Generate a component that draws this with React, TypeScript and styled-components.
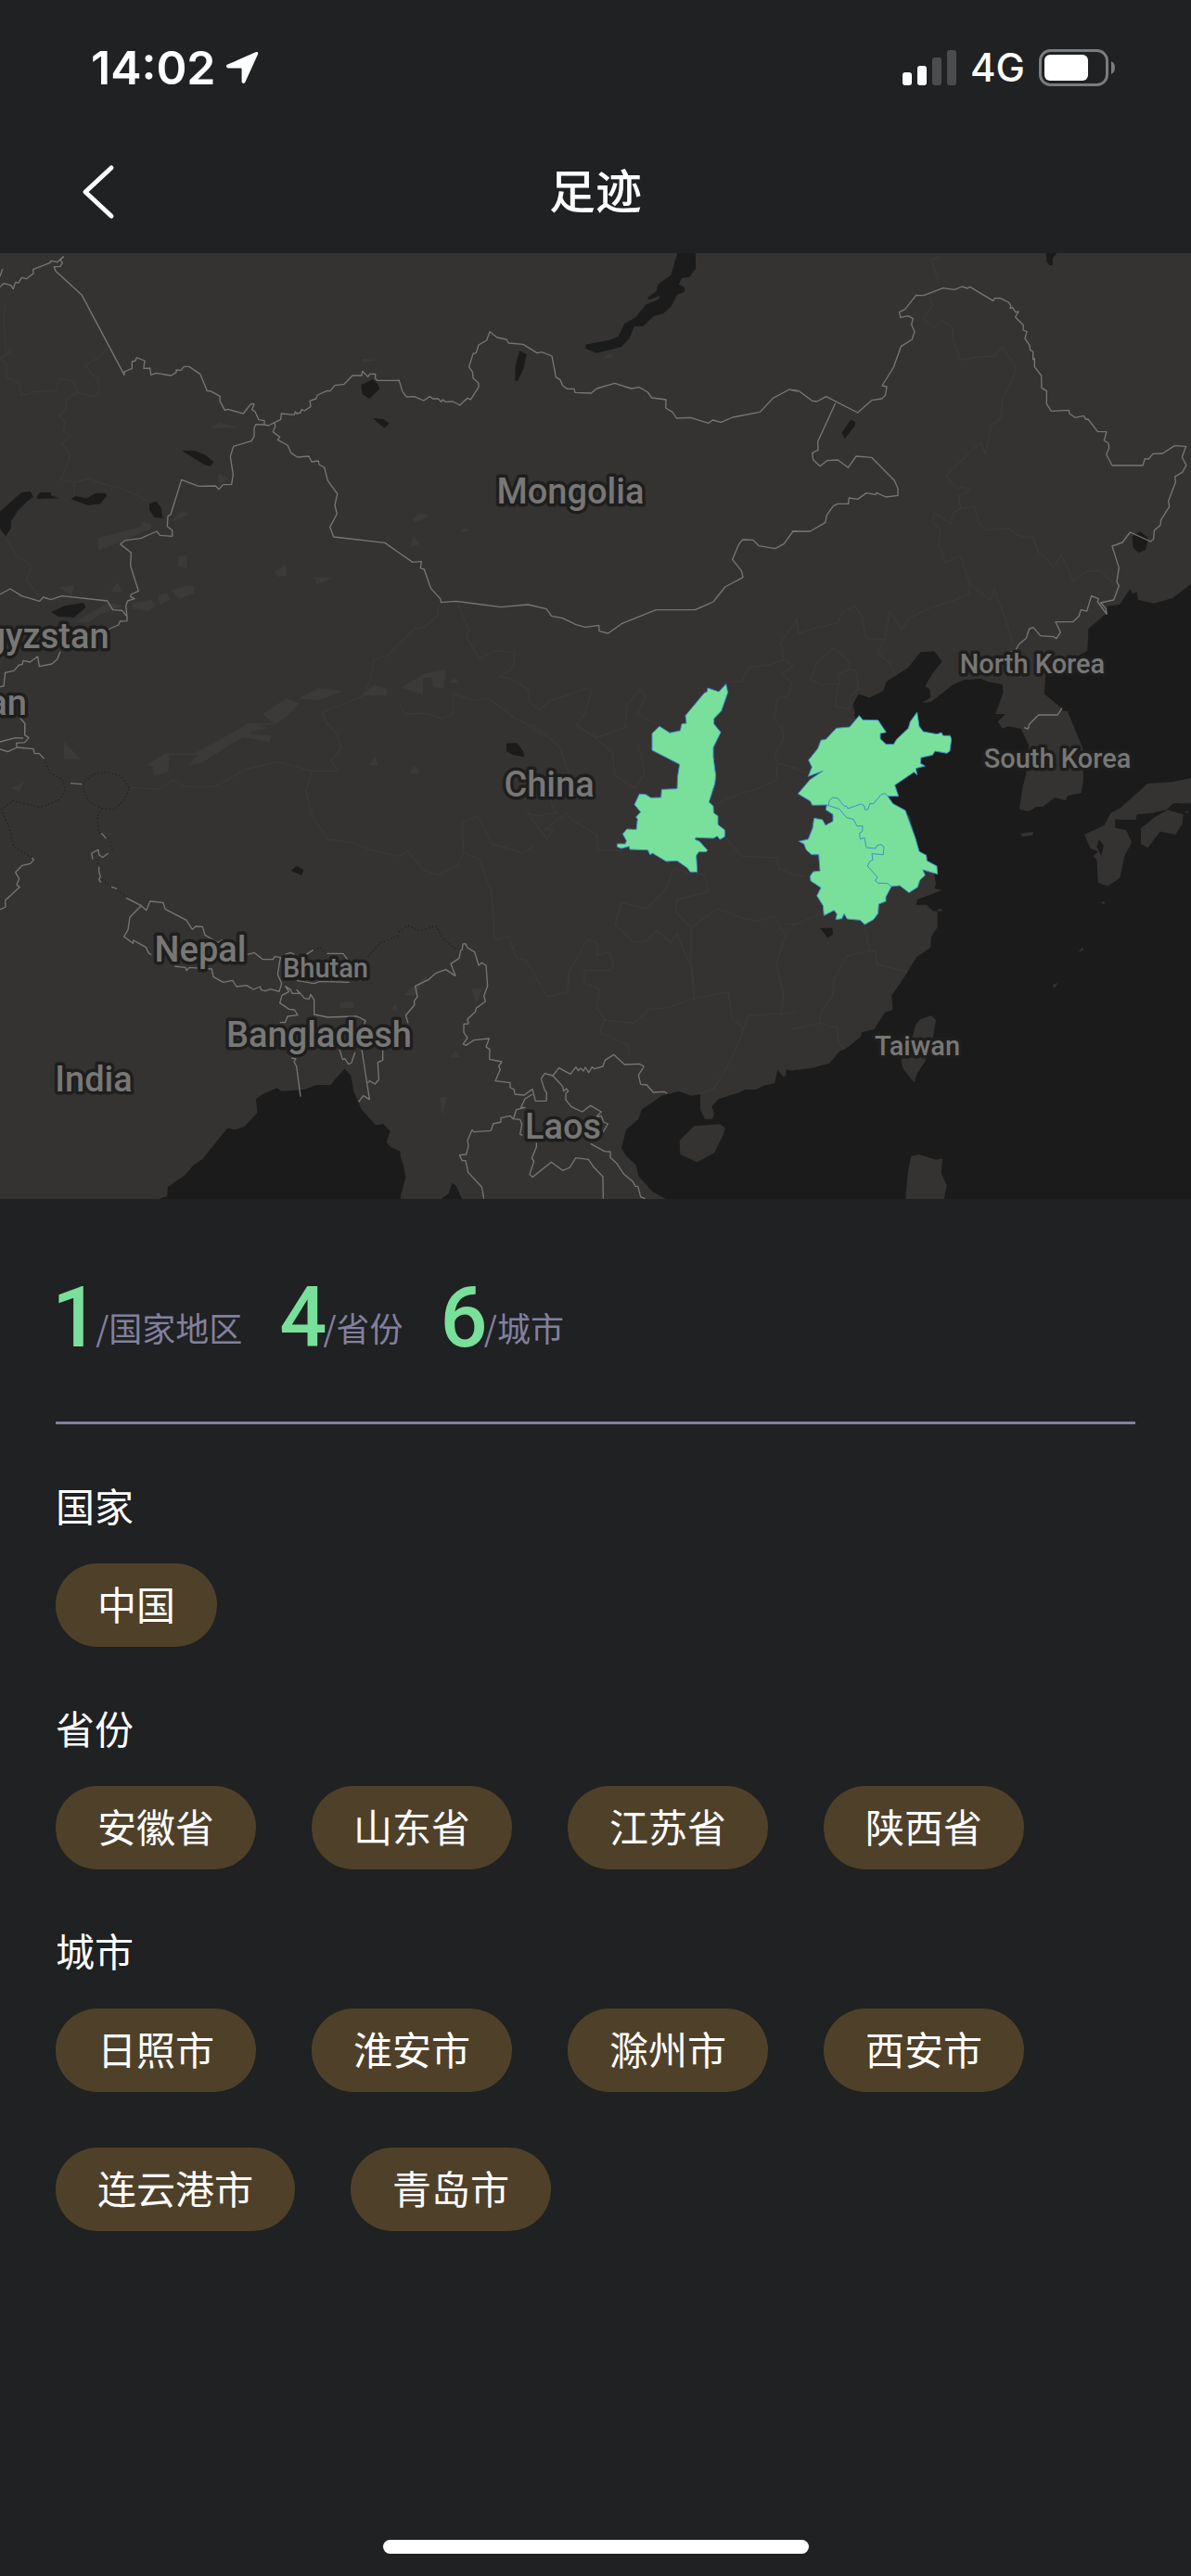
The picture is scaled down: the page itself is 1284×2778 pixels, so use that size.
import React from "react";
import styled, { createGlobalStyle } from "styled-components";

const GlobalStyle = createGlobalStyle`
  *, *::before, *::after { box-sizing: border-box; }
  body {
    margin: 0;
    background: #1f2122;
    color: #ffffff;
    font-family: Inter, "Noto Sans CJK SC", sans-serif;
  }
`;

const Screen = styled.div`
  display: flex;
  flex-direction: column;
  min-height: 100vh;
  background: #1f2122;
`;

const StatusBar = styled.div`
  display: flex;
  align-items: center;
  justify-content: space-between;
  height: 146px;
  padding: 0 80px 0 98px;
`;

const StatusGroup = styled.div<{ $gap: number }>`
  display: flex;
  align-items: center;
  gap: ${(p) => p.$gap}px;
`;

const Clock = styled.time`
  font-size: 50px;
  line-height: 60px;
  font-weight: 600;
`;

const Network = styled.span`
  font-size: 42px;
  line-height: 60px;
  font-weight: 500;
`;

const NavBar = styled.header`
  display: grid;
  grid-template-columns: 1fr auto 1fr;
  align-items: center;
  height: 127px;
  padding: 0 80px 5px;
`;

const BackButton = styled.button`
  display: flex;
  justify-self: start;
  padding: 0;
  border: 0;
  background: none;
  color: inherit;
`;

const NavTitle = styled.h1`
  margin: 0;
  font-size: 50px;
  line-height: 60px;
  font-weight: 500;
`;

const MapView = styled.svg`
  display: block;
  width: 100%;
  height: auto;
  background: #353332;
  font-family: Roboto, sans-serif;
`;

const Content = styled.main`
  flex: 1;
  padding: 0 60px;
`;

const Stats = styled.dl`
  display: flex;
  align-items: flex-end;
  gap: 44px;
  height: 243px;
  margin: 0;
  padding-bottom: 66px;
  border-bottom: 3px solid #82809f;
`;

const Stat = styled.div`
  display: flex;
  flex-direction: row-reverse;
  align-items: flex-end;
`;

const StatValue = styled.dd`
  margin: 0 -4px;
  color: #79e09b;
  font-family: Roboto, sans-serif;
  font-size: 90px;
  line-height: 90px;
  font-weight: 500;
`;

const StatLabel = styled.dt`
  margin-bottom: 6px;
  color: #82809f;
  font-family: "Noto Sans CJK SC", sans-serif;
  font-size: 36px;
  line-height: 60px;
`;

const Section = styled.section`
  padding-top: 60px;
`;

const SectionTitle = styled.h2`
  margin: 0 0 30px;
  font-size: 42px;
  line-height: 60px;
  font-weight: 400;
`;

const Tags = styled.ul`
  display: flex;
  flex-wrap: wrap;
  gap: 60px;
  margin: 0;
  padding: 0;
  list-style: none;
`;

const Tag = styled.li`
  padding: 2px 45px 0;
  border-radius: 45px;
  background: #4f4129;
  font-size: 42px;
  line-height: 88px;
`;

const HomeArea = styled.footer`
  display: flex;
  justify-content: center;
  padding: 24px 0;
`;

const HomeIndicator = styled.div`
  width: 459px;
  height: 15px;
  border-radius: 8px;
  background: #ffffff;
`;

const LAND = "#353332";
const WATER = "#1b1b1b";

/* The map is drawn in tiles; every tile has its own origin and three units per map pixel. */
const TILES = {
  nw: [0, 270],
  n: [430, 270],
  ne: [854, 270],
  sw: [0, 780],
  s: [430, 780],
  se: [854, 780],
  east: [640, 720],
} as const;

type Shape = { tile: keyof typeof TILES; d: string };

const seas: Shape[] = [
  { tile: "ne", d: "M1300 1072L1230 1125 1170 1142 1118 1130 1115 1105 1100 1110 1093 1095 1060 1145 1020 1152 1015 1175 958 1225 955 1295 820 1370 815 1435 870 1480 900 1540 915 1570 1300 1570Z" },
  { tile: "ne", d: "M485 1330L460 1297 415 1300 375 1350 305 1395 295 1425 250 1447 215 1435 196 1470 205 1500 230 1570 720 1570 650 1520 683 1430 680 1405 632 1395 610 1385 555 1390 520 1405 450 1460 420 1465 448 1445 445 1420 430 1410 450 1375Z" },
  { tile: "se", d: "M200 -30L300 240 380 300 410 410 460 490 465 520 460 535 485 540 405 570 400 587 435 588 455 607 470 610 470 660 450 690 448 725 402 757 370 810 340 855 322 880 325 928 300 935 265 990 225 1000 222 1015 170 1055 155 1060 120 1100 65 1115 30 1120 0 1125 -20 1120 -20 1560 1295 1560 1295 -30Z" },
  { tile: "s", d: "M1290 1120L1265 1125 1245 1145 1225 1122 1215 1165 1180 1172 1155 1185 1120 1185 1100 1195 1035 1215 1012 1240 1020 1262 1015 1280 990 1280 975 1250 975 1200 945 1205 905 1190 850 1205 785 1250 775 1280 735 1315 720 1375 735 1400 768 1430 775 1465 820 1515 865 1540 865 1560 1290 1560Z" },
  { tile: "s", d: "M-20 1385H0L15 1430 22 1470 3 1540-20 1560ZM172 1487L184 1495 205 1540H135L162 1520Z" },
  { tile: "sw", d: "M510 1540L540 1530 543 1500 600 1460 625 1430 655 1410 735 1310 760 1315 790 1305 832 1260 828 1215 850 1200 895 1180 910 1190 985 1185 1025 1170 1070 1170 1085 1150 1115 1118 1135 1140 1145 1195 1170 1250 1215 1300 1240 1297 1262 1320 1250 1355 1265 1372 1295 1385 1295 1560 510 1560Z" },
];

const lakes: Shape[] = [
  { tile: "n", d: "M902 5L880 80 838 110 832 132 804 154 810 160 845 146 840 158 800 175 765 217 730 237 710 278 680 290 604 305 604 318 640 332 720 312 745 285 762 245 790 245 825 212 855 205 880 182 900 143 922 136 925 120 905 110 915 90 940 86 960 60V5Z" },
  { tile: "n", d: "M390 325L413 335 404 380 385 422 376 423 377 375Z" },
  { tile: "nw", d: "M1168 435L1205 418 1220 430 1228 448 1195 480 1172 465ZM1205 543L1240 546 1259 560 1243 575ZM588 648L628 648 665 662 691 685 680 698 662 694ZM0 845L30 818 70 783 98 780 108 797 85 815 58 842 36 875 35 900 18 925 0 900ZM120 795L130 783 165 783 165 793 192 802 120 804ZM229 805L245 795 280 802 310 785 340 785 346 792 325 820 285 825ZM483 820L505 812 520 830 527 866 500 865 483 840ZM165 1170L210 1150 270 1140 278 1155 240 1187 190 1185Z" },
  { tile: "ne", d: "M160 590L190 548 204 555 203 568 170 609ZM1100 925L1125 910 1152 930 1143 970 1120 978 1103 962ZM820 5L857 8 843 25 842 48H832L824 38Z" },
  { tile: "sw", d: "M940 477L960 461 982 475 976 492Z" },
  { tile: "s", d: "M348 65L382 64 402 90 406 109 370 103 348 90Z" },
  { tile: "se", d: "M90 662L130 662 132 683 115 694Z" },
];

const islands: Shape[] = [
  { tile: "se", d: "M665 -5L680 17 700 10 740 18 765 70 760 150 745 210 735 278 765 285 790 270 810 270 850 240 885 250 890 235 935 225 942 185 940 80 915 20 890 -40 700 -40Z" },
  { tile: "se", d: "M1030 290L1060 275 1150 195 1230 190 1295 176 1295 260 1235 258 1210 280 1165 290 1115 295 1110 318 1045 310 1045 338 1080 345 1098 385 1075 430 1060 500 1020 527 990 515 985 440 973 430 990 415 965 405 945 360 1010 330Z" },
  { tile: "se", d: "M1128 340L1170 305 1215 280 1230 285 1265 295 1262 325 1240 360 1190 350 1150 403 1128 390Z" },
  { tile: "se", d: "M390 1010L400 975 415 958 450 945 465 960 455 1020 430 1095 405 1130 395 1162 360 1120 352 1090Z" },
  { tile: "se", d: "M385 1400L410 1395 465 1412 487 1408 482 1455 500 1495 490 1545 366 1545 375 1450Z" },
  { tile: "se", d: "M737 358L780 350 778 362 745 367ZM925 740L940 724 941 734ZM842 847L860 840 848 858ZM998 580L1010 576V587ZM470 601H485V608H470ZM1268 288L1282 283 1278 292Z" },
  { tile: "s", d: "M955 1303L1040 1297 1055 1310 1050 1330 1020 1390 965 1420 910 1395 908 1350Z" },
];

const inlets: Shape[] = [
  { tile: "se", d: "M1045 312L1112 312 1118 345 1080 340 1045 338ZM992 375L1008 395 1000 428 985 400Z" },
];

const greenery: Shape[] = [
  { tile: "nw", d: "M318 930L455 895 460 878 488 885 490 900 318 972ZM675 575L710 558 770 573ZM705 720L742 738 708 757ZM580 990L605 985V1028L575 1020ZM553 1100L600 1085H628V1110L580 1127ZM510 1118L540 1108 550 1130 515 1147ZM430 1140L490 1130 503 1148 480 1168 428 1160ZM240 1205L350 1140 400 1150 320 1180 290 1202ZM190 1090L238 1085 233 1118ZM357 1105L380 1074 398 1105ZM555 875L590 842 612 855ZM887 1040L925 1015 928 1052 900 1057ZM1015 1055L1075 1060 1025 1080ZM965 1450L1030 1417 1110 1425 1030 1455ZM850 1500L925 1450 968 1465 935 1500 890 1535ZM770 1560L800 1530 870 1545 800 1560ZM1170 1440L1210 1405 1255 1420 1250 1440ZM1172 350L1220 355 1175 362Z" },
  { tile: "n", d: "M45 868L70 850 98 860 50 882ZM35 960L48 925 68 950ZM200 912L210 897 232 907ZM5 1415L85 1368 152 1357 145 1418 112 1413 105 1382 78 1382V1436ZM165 1398L180 1380 198 1400ZM660 350L680 332 700 345Z" },
  { tile: "sw", d: "M207 60L262 116H207ZM475 135L535 97H630L770 20 800 0 900 0 815 12 808 35 880 40 870 60 785 45 650 130 607 136 640 102H548L545 155 500 172 495 140ZM1195 136L1212 106 1224 136ZM35 210L80 190 60 222ZM1100 902H1145V921H1100ZM1265 925L1280 905 1288 930Z" },
  { tile: "s", d: "M35 160L50 138 68 150 60 165ZM235 857H270L250 910ZM165 1082L185 1058 197 1080ZM133 1212L155 1208 142 1272ZM15 880L90 815 90 830 50 880Z" },
];

const provinces: Shape[] = [
  { tile: "nw", d: "M15 180L12 240 20 320 38 325 0 350 20 370 22 412 60 425 70 470 115 457 180 455 195 415 240 425 250 460 215 480 210 515 190 535 210 555 205 585 230 600 200 625 228 660 215 700 197 742 240 750 290 738 330 755 400 773 480 810M250 460L300 473 320 460 318 410 300 405 275 370 315 350 345 320M240 750V800M20 930L55 990 105 1020 85 1065 130 1125M1290 1270L1255 1310 1210 1325 1195 1400 1170 1445 1040 1495 1062 1540" },
  { tile: "n", d: "M0 1275L50 1225 90 1215 125 1180 130 1145M190 1140L228 1230 218 1250 260 1320 315 1295 375 1300 370 1350 325 1380 360 1385 418 1420 420 1460 455 1487 490 1455 545 1440 600 1418 625 1420 600 1500 575 1540 640 1575M0 1465L20 1500 90 1498 140 1515 175 1500 178 1435 240 1455 290 1450 370 1510 430 1540 470 1575M730 1550L740 1470 780 1420 800 1440 770 1500 830 1530M1070 1395L1110 1395 1130 1350 1200 1340 1245 1325 1235 1270 1290 1190M1250 1325L1275 1345 1240 1370 1270 1400 1260 1440 1225 1450 1215 1510 1245 1560" },
  { tile: "ne", d: "M480 20L450 30 475 105M445 150L455 175 425 220 460 250 485 228 520 250 520 290 545 355 600 345 655 342 680 312 725 380 705 435 680 475 675 545 645 565 625 660 610 620 497 730 530 770 555 765 575 775 540 795 545 835 590 828 605 885 630 905 700 900 730 922 780 930 795 975 820 995 845 1025 870 985 910 1070 950 1040 995 1035 1045 1085M545 835L520 850 515 885 460 850 455 880 480 905 475 950 495 1010 545 988 575 1080 640 1130 655 1100 690 1190 715 1280M575 1080L570 1115 500 1140 450 1155 380 1190 355 1225 315 1168 300 1260 240 1255 225 1185 205 1150 160 1170 150 1205 60 1225 20 1240 15 1190M300 1260L275 1300 320 1340 335 1375M135 1285L185 1330 185 1355 150 1370 155 1400 100 1405 60 1390 80 1335ZM150 1400L140 1475 185 1485 190 1440 215 1420 205 1360 185 1355" },
  { tile: "sw", d: "M425 208L515 213 560 183 600 205 690 205 740 180 790 150 900 125 1010 155 1095 155 1070 120 1105 80 1085 30 1060 0M1010 155L990 220 1010 300 1060 375 1135 385 1200 410 1290 430" },
  { tile: "s", d: "M430 0L520 75 550 165 490 255 510 290 450 300 415 290 480 375 500 340 470 345 540 290 570 320 640 360 640 410 710 412M570 0L635 48 740 10M635 48L690 95 700 170 765 210 795 160 775 70M0 430L30 415 80 475 125 490 190 460 210 420 260 440 300 545 310 700 355 690 380 760 410 765 480 885 545 870 550 805 610 700 640 710 640 750 680 740 695 775 685 800 600 800 600 840 650 860 640 920 665 960 650 1000 740 1040 745 1070M210 420L205 320 255 300 300 390 400 420 440 395M1030 260L1110 225 1150 215 1220 185 1225 130 1290 145M1225 130L1215 100 1245 50 1240 0M1060 375L1110 430 1220 435 1230 470 1290 495M890 470L860 540 800 600 720 580 700 650 760 710 800 705 835 670 880 710 900 680 920 730 950 800 955 890 870 920 810 925 760 970 665 960M890 470L940 485 990 490 1000 545 900 570 895 610 945 660 1030 600 1110 630 1160 640 1215 625 1250 690 1220 780 1245 880 1235 940 1130 945 1115 990 1075 1090 1020 1180 975 1200M945 660V780L955 890 1065 870 1080 960 1115 985M1250 650H1290M1235 940L1290 935" },
  { tile: "se", d: "M0 655L95 615M235 660L250 735 175 755 135 830 130 885 95 930 88 970 0 990M88 970L145 985 150 1030 170 1055M250 735L270 740 275 780 375 805M0 145L50 160M0 490L45 495" },
];

const disputed: Shape[] = [
  { tile: "sw", d: "M143 115L160 160 200 180 213 215 190 250 130 272 40 250 5 280 30 340 45 400 105 435M268 197L300 165 345 158 390 170 420 210 400 250 370 280 330 275 290 255 272 225ZM330 275L315 300 318 350 355 375 365 415M315 440L318 465M330 505L360 530 410 560M1015 735L1035 725 1055 745M1190 755L1230 710 1290 687" },
  { tile: "s", d: "M0 675L30 655 65 672 120 655 145 700 190 735" },
];

const borders: Shape[] = [
  { tile: "nw", d: "M0 118L12 107 35 113 43 125 50 103 60 105 70 88 85 92 108 75 107 62 162 40 165 34 185 38 205 20M207 20L195 30 202 40 195 52 175 53 180 67 265 145 402 403 402 393 427 382 427 360 438 357 442 347 468 357 465 382 485 381 488 403 505 397 553 405 570 395V387L585 388 595 376 612 376 648 401 670 455 680 455 712 472 711 487 727 517 737 514 787 528 812 496 822 497 815 515 825 522 837 548 855 551 855 564 868 567 908 547 910 528 952 532 955 522 960 528 972 525 975 515 985 519 1005 505 1002 487 1022 480 1027 468 1058 454 1068 455 1083 437 1113 433 1140 405 1170 405 1172 391 1190 409 1196 400 1214 400V415L1220 421 1290 421M855 564L827 563 822 575V602L813 617 755 634 745 667 754 725 749 757 722 758 708 773 697 762 642 763 587 742 552 855 543 860 541 893 557 905V925L518 922 507 909 455 932 405 938 389 950 424 978 422 1020 448 1102 424 1113 422 1120 435 1127 413 1134 407 1150 411 1185 395 1165 365 1163 347 1134 200 1118 165 1130 140 1122 128 1135 70 1118 33 1095 0 1113M411 1185V1199L388 1200 383 1212 348 1227M195 1298L185 1323 168 1338 127 1346 122 1314 97 1332 75 1327 72 1340 62 1341 45 1360 17 1366 12 1410 0 1412M64 1512L80 1530V1560M888 558L890 570 883 587 905 604 898 613 930 630 941 655 962 669 999 666 1008 684 1030 681 1032 693 1049 702 1060 745 1091 787 1083 825 1090 852 1067 895 1079 927 1245 946 1290 978M8 60L0 85" },
  { tile: "n", d: "M0 418L12 458 25 474 50 473 80 486 100 473 110 480 127 480 137 490 142 483 150 490 175 489 197 501 222 478 232 483 258 442V430L240 413 238 393 227 377 240 334 250 332 258 306 284 291 294 263 318 282 348 288 355 300 402 304 447 332 462 329 495 342 508 410 522 419 530 438 545 448 567 448 570 460 622 462 640 447 698 430 752 447 778 443 805 459 818 477 864 483 863 510 885 523 898 543 943 541 1002 559 1015 549 1042 556 1080 540 1168 523 1210 478 1263 450 1290 456M0 978L45 1009 73 1006 70 1028 82 1032 103 1093 134 1127 137 1139 185 1135 330 1154 418 1146 477 1160 494 1183 530 1190 573 1211 603 1219 647 1213 648 1232 677 1239 720 1208 832 1163H958L1017 1137 1055 1089 1113 1058 1108 1037 1079 1000 1100 950 1112 936 1145 937 1165 956 1217 965 1245 950 1275 909 1290 909" },
  { tile: "ne", d: "M0 451L22 455 65 487 80 489 110 473 212 525 257 485 290 480 302 468 306 441 291 438 328 378 352 311 388 288 396 263 386 240 391 221 375 212 350 217 347 199 365 191 401 145 425 146 488 122 525 127 550 117 567 123 575 118 650 163 655 155 672 154 700 168 707 178 705 188 713 184 722 200 732 198 722 216 748 242 747 258 759 263 753 285 768 307 770 323 779 327V353L784 350 784 377 806 405 807 445 823 455V497L838 520 895 517 897 528 915 541 943 535 950 547 957 546 988 586 1017 587 1009 615 1023 624 1025 640 1016 660 1035 696H1134L1141 674 1153 675 1167 658 1198 657 1237 632 1274 634 1261 669 1275 695 1262 718 1238 732 1240 750 1217 811 1220 829 1193 872 1191 889 1171 907 1169 934 1160 942 1093 912 1068 945 1035 957 1057 1027 1050 1072 1057 1085 1040 1131 998 1140 1015 1160 1018 1178M140 494L83 619 84 646 65 655 68 677 90 698 113 680 148 678 181 703 207 666 257 670 331 745 342 770V793L303 798 273 784 270 790 240 785 212 805 184 801 182 820 147 820 133 827 112 857 107 881 58 909H0M1018 1178L988 1137 991 1127 968 1118 953 1167 934 1163 927 1184 908 1202 852 1202 868 1235 855 1256 845 1250 803 1247 780 1220 767 1224 757 1255 733 1275 722 1295 703 1300M750 1544L763 1548 767 1533 797 1503H858L873 1481" },
  { tile: "sw", d: "M80 0V38L93 47 80 62 53 64 55 78 108 83 112 98 127 98 143 115M0 60L50 47 75 48M0 84L25 92 55 78M228 194L266 197M0 603L18 594 17 573 63 530 54 522 62 503 50 482 72 460 98 454 109 442 104 435M328 355L343 372M300 440L296 420 318 409 320 425 332 434 350 420M320 464V480L325 497 320 505 326 515M360 529L378 536M408 565L457 590 473 605 485 576 528 580 534 601 603 637 622 667 633 657 655 658 663 685 705 710 720 700M457 590L420 627 414 668 401 690 430 712 432 702 472 725 482 745 490 748M565 786L600 790 603 800 612 790 685 795 690 820 722 838 752 832 765 852 797 848 820 861 842 852 845 863 858 866 875 860 903 868 911 842 898 812 907 757 888 755 883 764 850 764 822 742 800 748M922 748L940 742 952 748M990 748L1013 733M1057 745H1110L1128 770M960 832L1015 842 1035 835 1130 838M922 850L940 862 945 874 968 874 960 862 985 890 1000 892 1005 877 1016 895V942L1060 951 1155 948 1182 962 1168 1010M922 850L935 868 912 880 905 905 935 925 952 927 963 944 930 948 922 968 905 968M943 1083L957 1086 951 1095 959 1110 972 1208M1098 1055L1108 1088 1115 1085 1127 1103 1137 1098 1148 1065M1170 1055L1195 1217 1175 1205 1160 1225M1190 1163L1195 1157 1213 1167 1225 1153 1222 1097 1238 1090V1055" },
  { tile: "s", d: "M30 970L22 945 50 912V898L60 885 53 850 95 830 120 808 152 797 183 817 168 778 195 760 200 735 205 732 207 714 216 713 222 726 245 740 258 783 268 775 282 783 287 850 275 882 280 900 250 922 247 934 222 957 225 972 210 973V1000L222 1018 208 1038 217 1042 243 1025 292 1020 282 1047 294 1055 293 1087 333 1095 323 1109 328 1120 312 1157 360 1163V1178L373 1185 375 1200 405 1203 432 1184 442 1222H477L478 1195 472 1188 460 1150 472 1133 498 1140 518 1115 555 1135 573 1112 580 1124 588 1116 597 1125 603 1113 614 1130 625 1112 633 1118 660 1110 667 1090 695 1072 730 1104 778 1102 793 1110 775 1138 782 1168 802 1170 823 1194 858 1192 868 1197M498 1140L530 1175 533 1190 542 1182 548 1190 540 1198V1218L557 1240 593 1257 620 1237 655 1257 637 1275 655 1270 662 1290 676 1296 660 1323M432 1200L408 1215 395 1243 408 1243 380 1250 370 1280 360 1270 330 1277V1290L305 1296 298 1318 242 1322 237 1315 222 1350 225 1367 218 1395 196 1397 205 1415H216L224 1453 268 1500 275 1538M370 1280L392 1282 398 1297 392 1330 400 1333M445 1357V1370L430 1407 437 1417 423 1460 433 1468 493 1420 530 1447 553 1437 572 1406 613 1411 632 1438 660 1467 661 1538M620 1360L665 1385 684 1386V1405L705 1424 727 1458 757 1483 765 1498 773 1498 782 1532 797 1538" },
];

const visited: Shape[] = [
  { tile: "east", d: "M428 53L434 80 413 140 389 165V182L411 209 387 258V290L395 350 392 375 373 435 387 448 388 470 402 480V508L424 525V547L408 556 400 545 387 552 330 550 328 556 342 562 368 590 364 596 340 596 332 608 335 661H312L303 648 270 625 235 627 190 600 183 606 175 590 117 588 115 578 90 585 76 580V570L103 570 106 560 94 538 108 522 138 524 142 490 137 483 152 467 132 443 148 409 168 410 185 421 218 420 220 394 270 392 272 350 278 313 189 267V213L213 190 246 211 280 204 285 182 300 180 297 155 358 82 367 78 369 66 405 78Z" },
  { tile: "east", d: "M859 155L870 169 920 170 946 209 927 213V230L946 248H970L980 232 1018 196 1024 175 1046 144 1053 190 1066 207 1110 215 1125 210 1130 220H1153L1157 232 1152 270 1142 277 1104 270 1096 283 1059 291 1057 310 1072 318 1042 326 1046 347 1036 338 974 380 986 416H951L968 440 1008 462 1040 550 1053 595 1076 607 1078 625 1110 642 1112 668 1065 654 1072 672 1055 687 1048 710 1020 728 990 705 963 708 945 742V756L922 765 920 795 905 815 877 831 862 817 820 813 810 796 803 812 783 815 787 798 778 785 745 802 742 770 722 738 735 712 702 690 700 675 710 660 732 658 728 605 705 605 688 590 680 570 664 562 694 555 708 520 713 487 740 492 750 510 774 497V475L751 460 754 444 707 445 701 432 661 408 700 362 742 334 694 352 706 322 695 299 725 262 735 235 751 232 785 196 828 192Z" },
];

const visitedBorders: Shape[] = [
  { tile: "east", d: "M760 445L762 430 774 420 790 423 810 448 818 448 822 456 865 441 875 447 878 460 888 458 893 440 905 440 930 410 943 407 951 416M754 444L795 458 818 485 840 490 852 513 870 512 869 530 860 535 862 555 876 550 882 582 913 585 917 575 930 572 939 580 937 605 900 602 903 622 893 627 886 642 918 678 911 690 920 697 950 698 963 708" },
];

const labels = [
  { text: "Mongolia", x: 615, y: 543, size: 38 },
  { text: "China", x: 592, y: 859, size: 38 },
  { text: "Nepal", x: 216, y: 1037, size: 38 },
  { text: "Bhutan", x: 351, y: 1054, size: 29 },
  { text: "Bangladesh", x: 344, y: 1129, size: 38 },
  { text: "India", x: 101, y: 1177, size: 38 },
  { text: "Laos", x: 607, y: 1228, size: 38 },
  { text: "North Korea", x: 1113, y: 726, size: 29 },
  { text: "South Korea", x: 1140, y: 828, size: 29 },
  { text: "Taiwan", x: 989, y: 1138, size: 29 },
  { text: "gyzstan", x: 51, y: 699, size: 38 },
  { text: "an", x: 8, y: 771, size: 38 },
];

function Layer({ shapes, ...style }: { shapes: Shape[] } & React.SVGProps<SVGGElement>) {
  return (
    <g fill="none" strokeLinejoin="round" {...style}>
      {shapes.map(({ tile, d }, i) => (
        <path key={i} d={d} transform={`translate(${TILES[tile].join(" ")}) scale(${1 / 3})`} />
      ))}
    </g>
  );
}

function FootprintMap() {
  return (
    <MapView viewBox="0 273 1284 1020" role="img" aria-label="足迹地图">
      <Layer shapes={greenery} fill="#3b3a38" />
      <Layer shapes={provinces} stroke="#3b3938" strokeWidth={4} />
      <Layer shapes={seas} fill={WATER} />
      <Layer shapes={islands} fill={LAND} />
      <Layer shapes={inlets} fill={WATER} />
      <Layer shapes={lakes} fill={WATER} />
      <Layer shapes={disputed} stroke="#222120" strokeWidth={4} strokeDasharray="4 8" />
      <Layer shapes={borders} stroke="#777675" strokeWidth={4} />
      <Layer shapes={visited} fill="#79e09b" stroke="#3a8fd0" strokeWidth={3} />
      <Layer shapes={visitedBorders} stroke="#3a8fd0" strokeWidth={3} />
      <g
        fill="#777776"
        stroke="#1f1e1e"
        strokeWidth={7}
        strokeLinejoin="round"
        paintOrder="stroke"
        textAnchor="middle"
        fontWeight={500}
      >
        {labels.map((l) => (
          <text key={l.text} x={l.x} y={l.y} fontSize={l.size}>
            {l.text}
          </text>
        ))}
      </g>
    </MapView>
  );
}

const stats = [
  { value: 1, label: "国家地区" },
  { value: 4, label: "省份" },
  { value: 6, label: "城市" },
];

const sections = [
  { title: "国家", tags: ["中国"] },
  { title: "省份", tags: ["安徽省", "山东省", "江苏省", "陕西省"] },
  { title: "城市", tags: ["日照市", "淮安市", "滁州市", "西安市", "连云港市", "青岛市"] },
];

export default function App() {
  return (
    <>
      <GlobalStyle />
      <Screen>
        <StatusBar>
          <StatusGroup $gap={10}>
            <Clock>14:02</Clock>
            <svg width="36" height="36" viewBox="0 0 36 36" fill="#fff" aria-hidden="true">
              <path d="M32.6 1.2C34.4.4 35.8 1.8 35 3.6L21.4 33.6C20.4 35.8 17.6 35.2 17.6 32.8V19.6Q17.6 18.4 16.4 18.4H3.2C.8 18.4.2 15.6 2.4 14.6Z" />
            </svg>
          </StatusGroup>
          <StatusGroup $gap={15}>
            <svg width="58" height="38" viewBox="0 0 58 38" fill="#fff" aria-hidden="true">
              <rect y="24" width="10" height="14" rx="3" />
              <rect x="16" y="17" width="10" height="21" rx="3" />
              <rect x="32" y="8" width="10" height="30" rx="3" fill="#4b4c4d" />
              <rect x="48" width="10" height="38" rx="3" fill="#4b4c4d" />
            </svg>
            <Network>4G</Network>
            <svg width="84" height="40" viewBox="0 0 84 40" fill="#fff" aria-hidden="true">
              <rect x="1.5" y="1.5" width="72" height="37" rx="11" fill="none" stroke="#7b7c7d" strokeWidth="3" />
              <rect x="6" y="6" width="47" height="28" rx="6" />
              <path d="M78 13Q82 15 82 20T78 27Z" fill="#7b7c7d" />
            </svg>
          </StatusGroup>
        </StatusBar>
        <NavBar>
          <BackButton aria-label="返回">
            <svg width="50" height="60" viewBox="0 0 50 60" fill="none" stroke="#fff" strokeWidth="5" strokeLinecap="round" strokeLinejoin="round" aria-hidden="true">
              <path d="M40 4L12 30 40 56" />
            </svg>
          </BackButton>
          <NavTitle>足迹</NavTitle>
        </NavBar>
        <FootprintMap />
        <Content>
          <Stats>
            {stats.map((s) => (
              <Stat key={s.label}>
                <StatLabel>/{s.label}</StatLabel>
                <StatValue>{s.value}</StatValue>
              </Stat>
            ))}
          </Stats>
          {sections.map((s) => (
            <Section key={s.title}>
              <SectionTitle>{s.title}</SectionTitle>
              <Tags>
                {s.tags.map((t) => (
                  <Tag key={t}>{t}</Tag>
                ))}
              </Tags>
            </Section>
          ))}
        </Content>
        <HomeArea>
          <HomeIndicator />
        </HomeArea>
      </Screen>
    </>
  );
}
